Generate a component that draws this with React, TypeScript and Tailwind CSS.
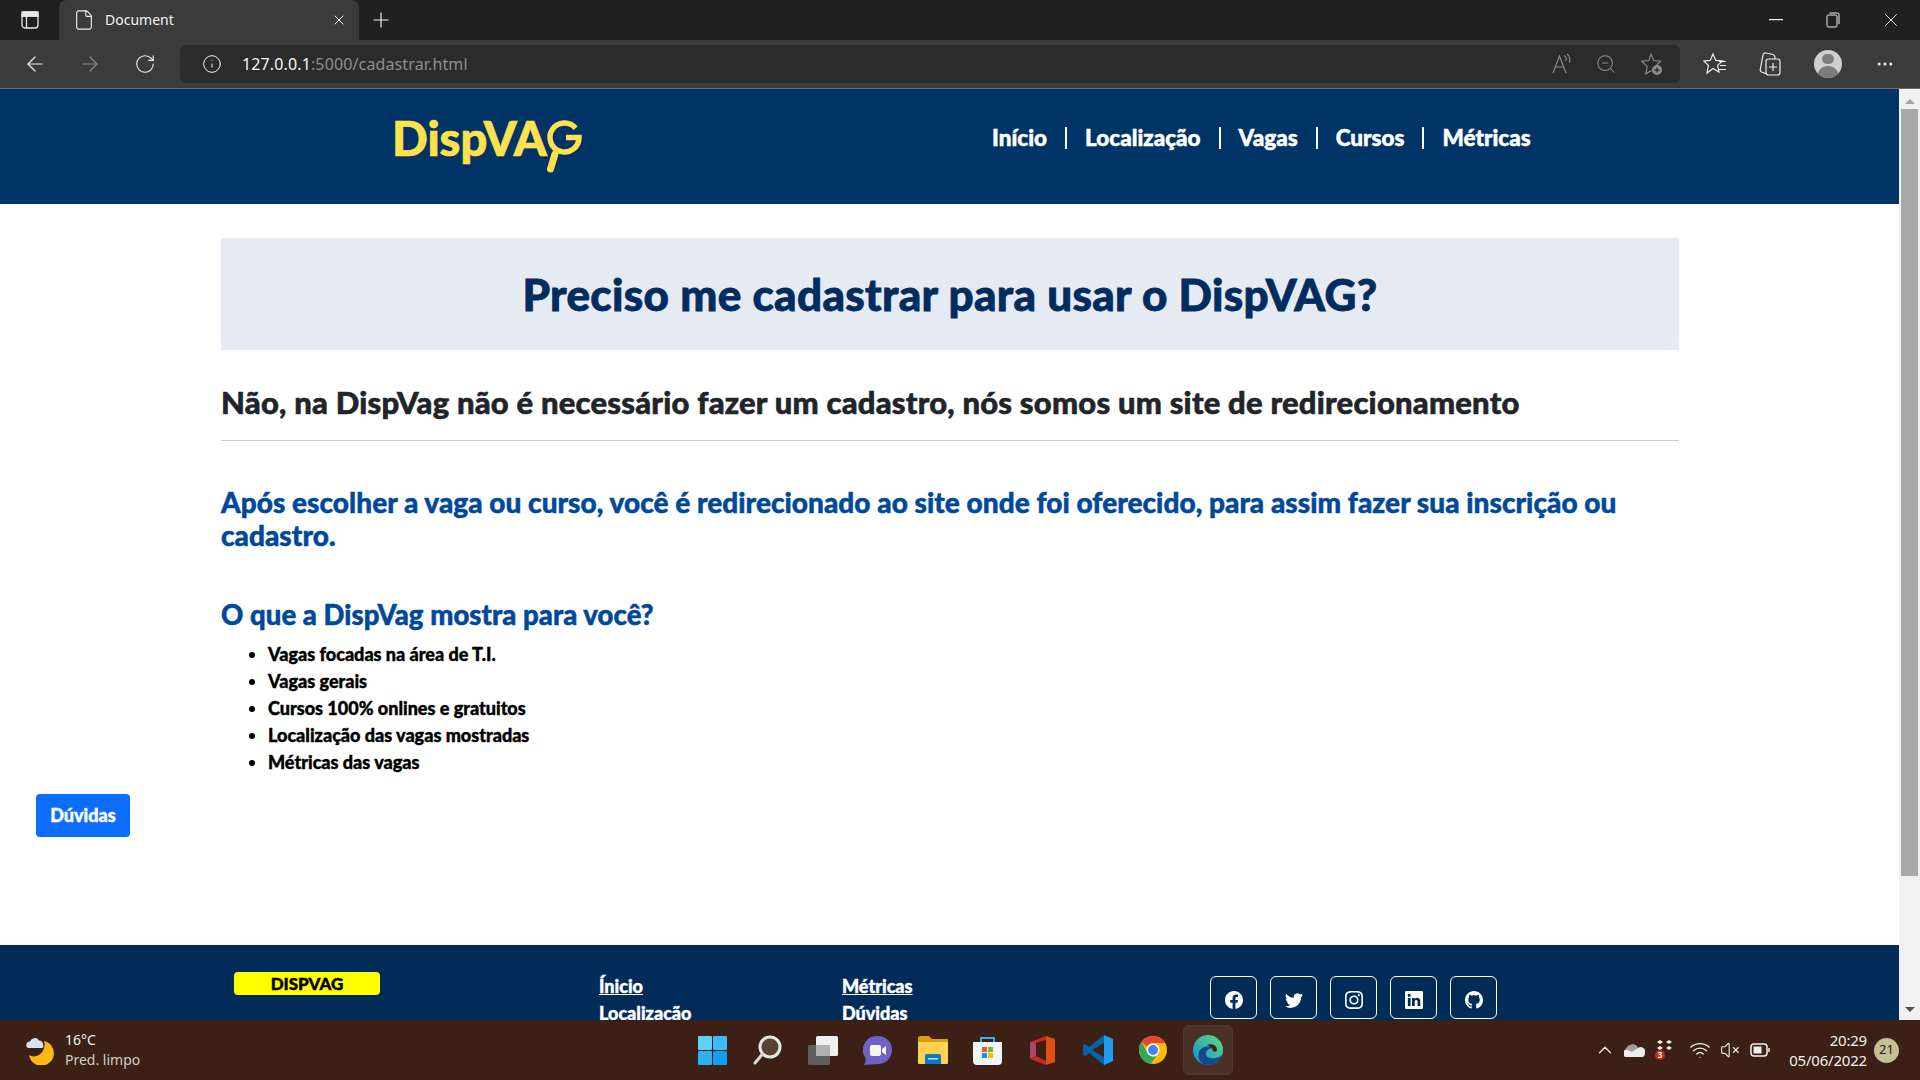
import { ArrowLeft, ArrowRight, ChevronUp, File, Info, MoreHorizontal, Plus, RotateCw, VolumeX, Wifi, X, ZoomOut } from "lucide-react";
import { BsFacebook, BsGithub, BsInstagram, BsLinkedin, BsTwitter } from "react-icons/bs";

const sans = "font-['Lato','Noto_Sans',sans-serif]";
const ui = "font-['Noto_Sans','Open_Sans',sans-serif]";

function LogoG() {
  return (
    <svg width="40" height="56" viewBox="0 0 40 56" fill="none" stroke="#ffe14d" className="-ml-[2px] mt-[2px] shrink-0">
      <path d="M30.6 9.2A14.5 14.5 0 1 0 34 18.5H21" strokeWidth="5.5" />
      <path d="M10 35L5.5 50" strokeWidth="7" strokeLinecap="round" />
    </svg>
  );
}

function TabStrip() {
  return (
    <div className="flex h-10 shrink-0 items-end bg-[#202020]">
      <div className="flex h-10 w-[59px] items-center justify-center">
        <svg width="18" height="18" viewBox="0 0 18 18" fill="none" stroke="#e8e8e8" strokeWidth="1.3">
          <rect x="1" y="1" width="16" height="16" rx="3" />
          <path d="M5.5 5V17M1 5H17" />
          <path d="M1 1H17V5H1Z" fill="#e8e8e8" />
        </svg>
      </div>
      <div className="flex h-10 w-[300px] items-center rounded-t-lg bg-[#3b3b3b] pl-[14px] pr-[12px] text-[#f2f2f2]">
        <File size={22} strokeWidth={1.2} />
        <span className={`ml-[10px] flex-1 -translate-y-px text-[14px] ${ui}`}>Document</span>
        <X size={16} strokeWidth={1.5} />
      </div>
      <div className="flex h-10 w-[44px] items-center justify-center text-[#f2f2f2]">
        <Plus size={24} strokeWidth={1.2} />
      </div>
      <div className="ml-auto flex h-10 items-center pr-[18px] text-[#f2f2f2]">
        <svg width="14" height="2" className="mr-[43px]"><rect width="14" height="1.2" fill="#f2f2f2" /></svg>
        <svg width="14" height="16" viewBox="0 0 14 16" fill="none" stroke="#f2f2f2" className="mr-[40px]">
          <rect x="1" y="3" width="10" height="12" rx="1.5" />
          <path d="M3.5 1H11.5A1.5 1.5 0 0 1 13 2.5V12" />
        </svg>
        <X size={22} strokeWidth={1} />
      </div>
    </div>
  );
}

function Toolbar() {
  return (
    <div className="flex h-[49px] shrink-0 items-center border-b border-[#6e6e6e] bg-[#3b3b3b] pb-px">
      <div className="flex w-[180px] items-center pl-[23px]">
        <ArrowLeft size={24} strokeWidth={1.2} className="text-[#efefef]" />
        <ArrowRight size={24} strokeWidth={1.2} className="ml-[31px] text-[#8a8a8a]" />
        <RotateCw size={22} strokeWidth={1.2} className="ml-[32px] text-[#efefef]" />
      </div>
      <div className="flex h-[38px] w-[1500px] items-center rounded-md bg-[#2b2b2b] pl-[22px] pr-[16px]">
        <Info size={20} strokeWidth={1.2} className="text-[#efefef]" />
        <span className={`ml-[20px] flex-1 text-[16px] tracking-[0.13px] text-[#8f8f8f] ${ui}`}>
          <span className="text-[#f5f5f5]">127.0.0.1</span>:5000/cadastrar.html
        </span>
        <svg width="22" height="22" viewBox="0 0 22 22" fill="none" stroke="#8f8f8f" strokeWidth="1.1" className="mr-[22px]">
          <path d="M2 20L8.5 3L15 20M4.5 14H12.5" />
          <path d="M13 2.5C15 3.5 15.5 6 14.8 8M16 1C19 3 19.5 7 18.3 9.5" />
        </svg>
        <ZoomOut size={22} strokeWidth={1.1} className="mr-[23px] text-[#8f8f8f]" />
        <svg width="24" height="24" viewBox="0 0 24 24" fill="none" stroke="#8f8f8f" strokeWidth="1.1">
          <path d="M16.5 13L20.8 9.2L13.8 8.6L11 2L8.8 8.6L1.8 9.2L7.2 14.6L5.8 21.8L11.5 18.5" />
          <circle cx="17" cy="18" r="5" fill="#8f8f8f" stroke="none" />
          <path d="M14.5 18H19.5M17 15.5V20.5" stroke="#2b2b2b" strokeWidth="1.4" />
        </svg>
      </div>
      <div className="flex flex-1 items-center pl-[23px] text-[#efefef]">
        <svg width="24" height="24" viewBox="0 0 24 24" fill="none" stroke="#efefef" strokeWidth="1.2">
          <path d="M10 2L12.8 8.4L19.5 9L14.6 13.4L16 20L10 16.5L4 21L5.4 13.4L.8 9L7.2 8.4Z" />
          <path d="M16 9.5H23M17 13.5H23M16 17.5H23" />
        </svg>
        <svg width="24" height="26" viewBox="0 0 24 26" fill="none" stroke="#efefef" strokeWidth="1.2" className="ml-[31px]">
          <path d="M9 23L3.5 21C2.5 20.5 2 19.5 2.2 18.5L5 4C5.2 2.5 6.5 1.5 8 2L15 3.5C16.5 4 17 5 17 6.5V8" />
          <rect x="8" y="8" width="14" height="16" rx="2.5" />
          <path d="M15 12V20M11 16H19" />
        </svg>
        <div className="ml-[32px] flex h-7 w-7 flex-col items-center overflow-hidden rounded-full bg-[#cfcfcf]">
          <div className="mt-[4px] h-[12px] w-[12px] rounded-full bg-[#7c7c7c]" />
          <div className="mt-[2px] h-[14px] w-[22px] rounded-t-full bg-[#7c7c7c]" />
        </div>
        <MoreHorizontal size={20} strokeWidth={1.6} className="ml-[33px]" />
      </div>
    </div>
  );
}

function Header() {
  const links = ["Início", "Localização", "Vagas", "Cursos", "Métricas"];
  return (
    <header className="flex h-[115px] shrink-0 bg-[#003366]">
      <div className="ml-[392px] flex h-[70px] w-[600px] items-start pt-[28px]">
        <span className="text-[47px] font-black leading-[42px] text-[#ffe14d] [-webkit-text-stroke:0.7px] font-['Lato',sans-serif]">DispVA</span>
        <LogoG />
      </div>
      <nav className={`flex h-[97px] items-center text-[22.5px] font-black text-white [-webkit-text-stroke:0.5px] ${sans}`}>
        {links.map((l, i) => (
          <div key={l} className="flex items-center">
            {i > 0 && <div className="mx-[18px] h-[22px] w-[2px] bg-white" />}
            <span>{l}</span>
          </div>
        ))}
      </nav>
    </header>
  );
}

function Main() {
  const items = [
    "Vagas focadas na área de T.I.",
    "Vagas gerais",
    "Cursos 100% onlines e gratuitos",
    "Localização das vagas mostradas",
    "Métricas das vagas",
  ];
  return (
    <main className={`h-[741px] shrink-0 ${sans}`}>
      <div className="mx-[221px] w-[1458px] pt-[34px]">
        <div className="flex h-[112px] items-center justify-center bg-[#e6ebf3]">
          <h1 className="text-[44px] font-black tracking-[0.35px] text-[#002c5f] [-webkit-text-stroke:0.8px]">Preciso me cadastrar para usar o DispVAG?</h1>
        </div>
        <h2 className="mt-[34px] text-[31px] font-black leading-[36px] tracking-[0.22px] text-[#212529] [-webkit-text-stroke:0.6px]">
          Não, na DispVag não é necessário fazer um cadastro, nós somos um site de redirecionamento
        </h2>
        <div className="mt-[20px] h-px bg-[#cfcfcf]" />
        <p className="mt-[45px] text-[28px] font-black leading-[33px] tracking-[0.04px] text-[#00489a] [-webkit-text-stroke:0.5px]">
          Após escolher a vaga ou curso, você é redirecionado ao site onde foi oferecido, para assim fazer sua inscrição ou cadastro.
        </p>
        <h3 className="mt-[46px] text-[27.5px] font-black leading-[33px] tracking-[0.07px] text-[#00489a] [-webkit-text-stroke:0.5px]">O que a DispVag mostra para você?</h3>
        <ul className="ml-[47px] mt-[10px] list-disc text-[18px] font-black leading-[27px] text-black [-webkit-text-stroke:0.4px]">
          {items.map((t) => (
            <li key={t}>{t}</li>
          ))}
        </ul>
      </div>
      <button className="ml-[36px] mt-[18px] flex h-[43px] w-[94px] items-center justify-center rounded-[4px] bg-[#0d6efd] text-[18px] font-black text-white [-webkit-text-stroke:0.4px]">
        Dúvidas
      </button>
    </main>
  );
}

function Footer() {
  const socials = [BsFacebook, BsTwitter, BsInstagram, BsLinkedin, BsGithub];
  return (
    <footer className={`h-[75px] flex-1 overflow-hidden bg-[#012b59] ${sans}`}>
      <div className="flex pt-[27px] text-[18px] font-black leading-[27px] text-white [-webkit-text-stroke:0.4px]">
        <div className="ml-[234px] flex h-[23px] w-[146px] items-center justify-center rounded-[4px] bg-[#ffff00] text-[17px] text-black">DISPVAG</div>
        <div className="ml-[219px] w-[243px] pt-[1px]">
          <div className="underline">Ínicio</div>
          <div>Localização</div>
        </div>
        <div className="w-[368px] pt-[1px]">
          <div className="underline">Métricas</div>
          <div>Dúvidas</div>
        </div>
        <div className="-mt-[23px] flex gap-[13px] pt-[27px]">
          {socials.map((Icon, i) => (
            <div key={i} className="flex h-[43px] w-[47px] items-center justify-center rounded-[6px] border border-white">
              <Icon size={18} className="translate-y-[2px]" />
            </div>
          ))}
        </div>
      </div>
    </footer>
  );
}

function Scrollbar() {
  return (
    <div className="flex w-[21px] shrink-0 flex-col items-center bg-[#f1f1f1]">
      <div className="mb-[5px] mt-[10px] h-0 w-0 border-x-[5px] border-b-[5px] border-x-transparent border-b-[#a3a3a3]" />
      <div className="h-[767px] w-[17px] bg-[#a8a8a8]" />
      <div className="mt-auto mb-[8px] h-0 w-0 border-x-[5px] border-t-[5px] border-x-transparent border-t-[#505050]" />
    </div>
  );
}

function Weather() {
  return (
    <svg width="30" height="30" viewBox="0 0 30 30">
      <path d="M19 6A12.5 12.5 0 1 1 4 20C12 25 22 16 19 6Z" fill="#fdb813" />
      <path d="M3 13A3.5 3.5 0 0 1 5 6.5A5 5 0 0 1 14 5.5A4 4 0 0 1 18 10A2 2 0 0 1 17 13Z" fill="#d5e2f2" />
    </svg>
  );
}

function Apps() {
  return (
    <div className="flex items-center">
      {/* windows */}
      <svg width="29" height="29" viewBox="0 0 29 29" className="mr-[26px]">
        <rect width="14" height="14" rx="1" fill="#5fd2f8" />
        <rect x="15" width="14" height="14" rx="1" fill="#3cbcf5" />
        <rect y="15" width="14" height="14" rx="1" fill="#2cb1f3" />
        <rect x="15" y="15" width="14" height="14" rx="1" fill="#159ef0" />
      </svg>
      {/* search */}
      <svg width="29" height="30" viewBox="0 0 29 30" fill="none" className="mr-[26px]">
        <circle cx="17" cy="12" r="10" fill="#5b4034" stroke="#e6e6e6" strokeWidth="3" />
        <path d="M9.5 19L2 28" stroke="#d8d8d8" strokeWidth="3" strokeLinecap="round" />
      </svg>
      {/* task view */}
      <svg width="30" height="29" viewBox="0 0 30 29" className="mr-[25px]">
        <rect x="8" width="22" height="20" rx="1.5" fill="#f0f0f0" />
        <rect y="9" width="22" height="20" rx="1.5" fill="#5e5e5e" />
        <rect x="8" y="9" width="14" height="11" fill="#b0b0b0" />
      </svg>
      {/* teams chat */}
      <svg width="29" height="29" viewBox="0 0 29 29" className="mr-[26px]">
        <path d="M15 0A14 14 0 0 1 15 28C11 28 6 29 1 29C2 27 3 25 2.5 22A14 14 0 0 1 15 0Z" fill="#6e62c4" />
        <rect x="7" y="9" width="11" height="11" rx="2" fill="#f5f5f5" />
        <path d="M19 13L23 10V19L19 16Z" fill="#f5f5f5" />
      </svg>
      {/* explorer */}
      <svg width="30" height="28" viewBox="0 0 30 28" className="mr-[25px]">
        <path d="M0 2A2 2 0 0 1 2 0H11L14 3H30V10H0Z" fill="#d9a00e" />
        <path d="M0 6H30V27A1 1 0 0 1 29 28H1A1 1 0 0 1 0 27Z" fill="#fdd34f" />
        <path d="M7 20A2 2 0 0 1 9 18H21A2 2 0 0 1 23 20V28H7Z" fill="#0b78c9" />
        <rect x="10" y="22" width="10" height="1.5" fill="#bfe3fb" />
      </svg>
      {/* store */}
      <svg width="29" height="29" viewBox="0 0 29 29" className="mr-[28px]">
        <path d="M8 7V2H21V7" fill="none" stroke="#2bb5f0" strokeWidth="2" />
        <path d="M0 6H29V25A4 4 0 0 1 25 29H4A4 4 0 0 1 0 25Z" fill="#f4f4f4" />
        <rect x="9" y="11" width="5" height="5" fill="#f05a28" />
        <rect x="15" y="11" width="5" height="5" fill="#7cb82f" />
        <rect x="9" y="17" width="5" height="5" fill="#0a9ce8" />
        <rect x="15" y="17" width="5" height="5" fill="#fdb813" />
      </svg>
      {/* office */}
      <svg width="25" height="29" viewBox="0 0 25 29" className="mr-[28px]">
        <path d="M0 6L16 0V29L0 23L6 20V7Z" fill="#c9252d" />
        <path d="M16 0L25 3V26L16 29Z" fill="#e04e10" />
        <path d="M0 6L6 7V20L0 23Z" fill="#b0436f" />
        <path d="M6 7L16 4V25L6 20Z" fill="#3c2015" />
      </svg>
      {/* vs code */}
      <svg width="30" height="30" viewBox="0 0 30 30" className="mr-[26px]">
        <path d="M21 0L30 4V26L21 30V0Z" fill="#1f9cf0" />
        <path d="M21 0V8L9 15L21 22V30L6 18L2 21L0 19.5V10.5L2 9L6 12Z" fill="#0065a9" />
      </svg>
      {/* chrome */}
      <svg width="28" height="28" viewBox="0 0 28 28" className="mr-[16px]">
        <circle cx="14" cy="14" r="14" fill="#fbbc04" />
        <path d="M14 0A14 14 0 0 1 26.1 7H14A7 7 0 0 0 7.9 10.5L2.5 6A14 14 0 0 1 14 0Z" fill="#ea4335" />
        <path d="M2.5 6L8 15.5A7 7 0 0 0 17.5 20L11.8 27.8A14 14 0 0 1 2.5 6Z" fill="#34a853" />
        <circle cx="14" cy="14" r="6.5" fill="#fff" />
        <circle cx="14" cy="14" r="5" fill="#4285f4" />
      </svg>
      {/* edge */}
      <div className="flex h-[50px] w-[50px] items-center justify-center rounded-md border border-[#54392d] bg-[#4a3026]">
        <svg width="30" height="30" viewBox="0 0 30 30">
          <defs>
            <linearGradient id="edgeTop" x1="0" y1="1" x2="1" y2="0">
              <stop offset="0" stopColor="#0f8fd8" />
              <stop offset="1" stopColor="#5fdc7c" />
            </linearGradient>
          </defs>
          <circle cx="15" cy="15" r="15" fill="url(#edgeTop)" />
          <path d="M30 19C28 26 21 30 15 30C8 30 4 24 6 17C8 12 15 10 20 13C16 13 12 16 13 20C14 24 25 25 30 19Z" fill="#134a8e" />
          <path d="M14 10C18 8 24 10 24 15C24 17 21 17 20 16C19 12 16 11 14 10Z" fill="#3c2015" />
        </svg>
      </div>
    </div>
  );
}

function Tray() {
  return (
    <div className={`flex items-center text-[#f0f0f0] ${ui}`}>
      <ChevronUp size={22} strokeWidth={1.3} />
      <svg width="21" height="14" viewBox="0 0 21 14" className="ml-[8px]">
        <path d="M1 14A4 4 0 0 1 2 6.5A6.5 6.5 0 0 1 14 5A4.5 4.5 0 0 1 21 10C21 12 20 14 18 14Z" fill="#ededed" />
        <path d="M2 6.5A6.5 6.5 0 0 1 14 5L8 9Z" fill="#9f9f9f" />
      </svg>
      <svg width="20" height="22" viewBox="0 0 20 22" className="ml-[10px]">
        <path d="M5 1L8 3L5 5L2 3ZM14 1L17 3L14 5L11 3ZM5 7L8 9L5 11L2 9ZM14 7L17 9L14 11L11 9Z" fill="#f0f0f0" />
        <circle cx="5" cy="16" r="5" fill="#c9281a" />
        <text x="5" y="19" textAnchor="middle" fontSize="8" fontWeight="700" fill="#fff">3</text>
      </svg>
      <Wifi size={22} strokeWidth={1.4} className="ml-[14px]" />
      <VolumeX size={20} strokeWidth={1.3} className="ml-[9px]" />
      <svg width="20" height="14" viewBox="0 0 20 14" fill="none" stroke="#f0f0f0" strokeWidth="1.5" className="ml-[10px]">
        <rect x="1" y="1" width="16" height="12" rx="3" />
        <rect x="3.5" y="3.5" width="8" height="7" fill="#f0f0f0" stroke="none" />
        <path d="M19 5V9" />
      </svg>
      <div className="ml-[19px] text-right text-[15px] leading-[20px] tracking-[-0.2px]">
        <div>20:29</div>
        <div>05/06/2022</div>
      </div>
      <div className="ml-[7px] flex h-[25px] w-[25px] items-center justify-center rounded-full bg-[#c4bf95] text-[13px] text-[#222]">21</div>
    </div>
  );
}

function Taskbar() {
  return (
    <div className="flex h-[60px] shrink-0 items-center justify-between bg-[#3c2015] pr-[21px]">
      <div className="flex w-[680px] items-center pl-[25px]">
        <Weather />
        <div className={`ml-[10px] text-[14px] leading-[20px] text-[#f0f0f0] ${ui}`}>
          <div>16°C</div>
          <div className="text-[#d4ccc8]">Pred. limpo</div>
        </div>
      </div>
      <div className="ml-[18px] flex-1">
        <Apps />
      </div>
      <Tray />
    </div>
  );
}

export default function App() {
  return (
    <div className="flex h-screen w-screen flex-col overflow-hidden bg-white">
      <TabStrip />
      <Toolbar />
      <div className="flex min-h-0 flex-1">
        <div className="flex min-w-0 flex-1 flex-col overflow-hidden">
          <Header />
          <Main />
          <Footer />
        </div>
        <Scrollbar />
      </div>
      <Taskbar />
    </div>
  );
}
